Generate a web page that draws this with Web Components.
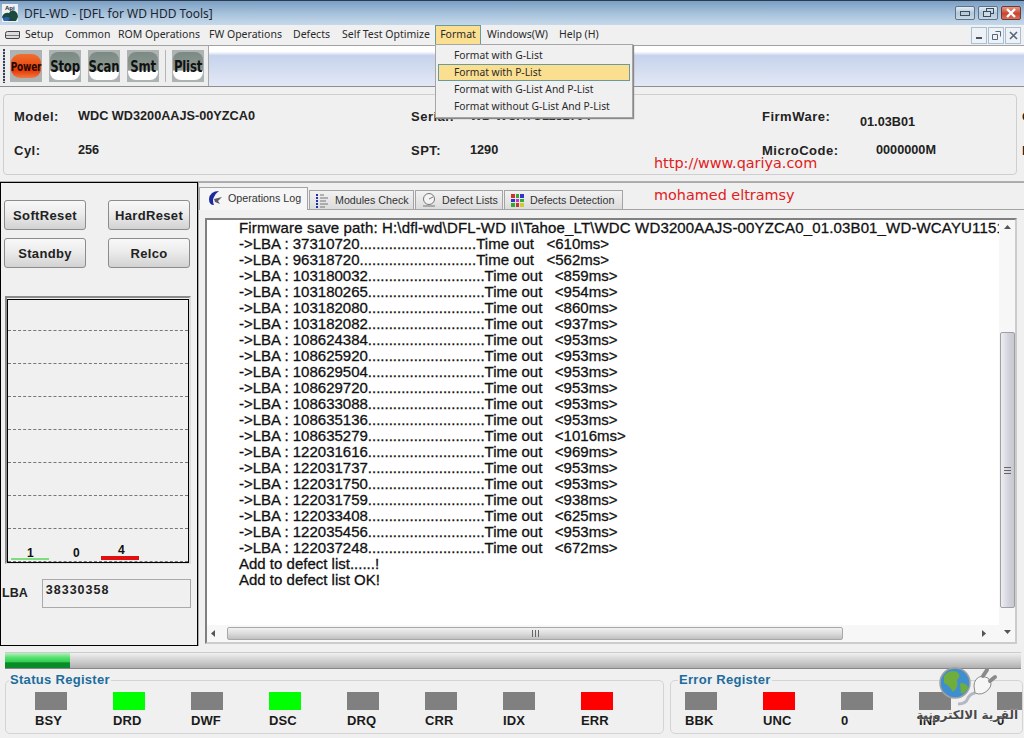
<!DOCTYPE html>
<html>
<head>
<meta charset="utf-8">
<title>DFL-WD</title>
<style>
  html, body { margin: 0; height: 738px; overflow: hidden; background: #f0f0f0; }
  body { display: flex; flex-direction: column; position: relative; font-family: "Liberation Sans", Arial, sans-serif; color: #222; }
</style>
</head>
<body>
<title-bar>DFL-WD - [DFL for WD HDD Tools]</title-bar>
<menu-bar></menu-bar>
<tool-bar></tool-bar>
<drive-info></drive-info>
<main-area>
  <control-panel slot="left"></control-panel>
  <log-panel slot="right"></log-panel>
</main-area>
<progress-strip></progress-strip>
<register-row>
  <register-group heading="Status Register" style="width:659px" pad="29" legend="3">
    <reg-lamp>BSY</reg-lamp><reg-lamp color="#00ff00">DRD</reg-lamp><reg-lamp>DWF</reg-lamp><reg-lamp color="#00ff00">DSC</reg-lamp>
    <reg-lamp>DRQ</reg-lamp><reg-lamp>CRR</reg-lamp><reg-lamp>IDX</reg-lamp><reg-lamp color="#ff0000">ERR</reg-lamp>
  </register-group>
  <register-group heading="Error Register" style="flex:1" pad="14" legend="7">
    <reg-lamp>BBK</reg-lamp><reg-lamp color="#ff0000">UNC</reg-lamp><reg-lamp>0</reg-lamp><reg-lamp>INF</reg-lamp><reg-lamp>0</reg-lamp>
  </register-group>
</register-row>
<red-note style="left:654px;top:155px">http://www.qariya.com</red-note>
<red-note style="left:654px;top:187px">mohamed eltramsy</red-note>
<site-mark></site-mark>

<script>
class TitleBar extends HTMLElement {
  constructor () {
    super()
    this.attachShadow({ mode: 'open' }).innerHTML = /*html*/`
      <style>
        :host { display: flex; align-items: center; height: 25px; box-sizing: border-box; border-top: 1px solid #2c3a4e;
          background: linear-gradient(#7b9fc4, #a8c3dc 55%, #c6d9ea); font: 12px "Noto Sans", sans-serif; color: #1c2430; padding: 0 3px 0 2px; }
        svg.logo { flex: none; margin-right: 6px; }
        .text { flex: 1; }
        .btns { display: flex; gap: 3px; padding-bottom: 1px; }
        .btn { width: 20px; height: 14px; box-sizing: border-box; border: 1px solid #5e7286; border-radius: 2px; display: flex; align-items: center; justify-content: center;
          background: linear-gradient(#e4edf5, #b4c8da 50%, #c8d8e6); }
        .close { background: linear-gradient(#e79a88, #c9442c 55%, #d8705c); border-color: #6e3a32; }
      </style>
      <svg class="logo" width="16" height="18" viewBox="0 0 16 18">
        <rect width="16" height="18" fill="#eef2f6"/>
        <text x="3" y="6" font-size="6" font-weight="700" font-family="Liberation Sans" fill="#223">Api</text>
        <path d="M0 13 Q2 8 7 9 Q9 5 13 7 Q16 9 16 13 L14 17 L2 17 Z" fill="#1d4a3e"/>
        <path d="M1 14 Q5 12 8 14 L6 17 L2 17 Z" fill="#2a62b8"/>
      </svg>
      <span class="text"><slot></slot></span>
      <div class="btns">
        <div class="btn"><svg width="12" height="8"><rect x="1.5" y="2.5" width="9" height="4" fill="none" stroke="#3c4c5c"/></svg></div>
        <div class="btn"><svg width="12" height="10"><rect x="4.5" y=".5" width="7" height="5" fill="none" stroke="#3c4c5c"/><rect x="1.5" y="3.5" width="7" height="5" fill="#cddbe7" stroke="#3c4c5c"/></svg></div>
        <div class="btn close"><svg width="12" height="10"><path d="M2 1 L10 9 M10 1 L2 9" stroke="#fff" stroke-width="2.4"/></svg></div>
      </div>`
  }
}
customElements.define('title-bar', TitleBar)

class MenuBar extends HTMLElement {
  constructor () {
    super()
    this.shadow = this.attachShadow({ mode: 'open' })
    this.data = [
      ['Setup', 40], ['Common', 53], ['ROM Operations', 91], ['FW Operations', 84],
      ['Defects', 49], ['Self Test Optimize', 93], ['Format', 46], ['Windows(W)', 72], ['Help (H)', 50]
    ]
  }

  connectedCallback () {
    this.shadow.innerHTML = /*html*/`
      <style>
        :host { display: flex; align-items: stretch; height: 21px; box-sizing: border-box; background: #f0f0f0; border-bottom: 1px solid #a2a2a2;
          font: 10.5px "Noto Sans", sans-serif; color: #2a2a2a; padding-left: 5px; position: relative; z-index: 5; }
        svg.drive { align-self: center; margin-right: 4px; flex: none; }
        .items { display: flex; flex: 1; }
        .item { box-sizing: border-box; white-space: nowrap; display: flex; align-items: center; border: 1px solid transparent; border-width: 1px 1px 1px 0; height: 20px; padding-bottom: 3px; }
        .active { background: #fbdf90; border: 1px solid #6b9a9a; justify-content: center; position: relative; }
        .after { padding-left: 6px; }
        .mdi { display: flex; gap: 1px; padding: 2px 3px 0 0; }
        .mdi div { width: 16px; height: 17px; box-sizing: border-box; border: 1px solid #a8c0d4; background: #eef2f6; display: flex; align-items: center; justify-content: center; }
        .drop { position: absolute; left: -1px; top: 18px; width: 198px; height: 74px; box-sizing: border-box; background: #f0f0f0;
          border: 1px solid #a6a6a6; box-shadow: 1px 1px 1px #888; padding: 2px 2px; display: flex; flex-direction: column; font-size: 10.3px; }
        .drop div { height: 17px; flex: none; box-sizing: border-box; line-height: 15px; padding-left: 15px; border: 1px solid transparent; white-space: nowrap; }
        .drop .hot { background: #fbdf90; border-color: #6b9a9a; }
      </style>
      <svg class="drive" width="16" height="10" viewBox="0 0 16 10">
        <path d="M2.5 1.5 H14.5 V7 Q14.5 8.5 13 8.5 H2 Q.5 8.5 .5 7 V3.5 Q.5 1.5 2.5 1.5Z" fill="#dcdcdc" stroke="#444"/>
        <path d="M1 5.5 H14" stroke="#777"/>
      </svg>
      <div class="items"></div>
      <div class="mdi">
        <div><svg width="9" height="9"><path d="M1 7 H7" stroke="#456" stroke-width="2"/></svg></div>
        <div><svg width="9" height="9"><path d="M3.5 .5 H8.5 V5.5 M.5 3.5 H5.5 V8.5 H.5Z" fill="none" stroke="#567"/></svg></div>
        <div><svg width="9" height="9"><path d="M1 1 L8 8 M8 1 L1 8" stroke="#567" stroke-width="1.6"/></svg></div>
      </div>`

    const items = this.shadow.querySelector('.items')
    let past = false

    this.data.forEach(entry => {
      const item = document.createElement('div')
      item.classList.add('item')
      item.style.width = entry[1] + 'px'
      if (past) item.classList.add('after')
      const label = document.createElement('span')
      label.textContent = entry[0]
      item.appendChild(label)
      items.appendChild(item)

      if (entry[0] === 'Format') {
        past = true
        item.classList.add('active')
        const drop = document.createElement('div')
        drop.classList.add('drop')
        const rows = ['Format with G-List', 'Format with P-List', 'Format with G-List And P-List', 'Format without G-List And P-List']
        rows.forEach((text, i) => {
          const row = document.createElement('div')
          row.textContent = text
          if (i === 1) row.classList.add('hot')
          drop.appendChild(row)
        })
        item.appendChild(drop)
      }
    })
  }
}
customElements.define('menu-bar', MenuBar)

class ToolBar extends HTMLElement {
  constructor () {
    super()
    this.shadow = this.attachShadow({ mode: 'open' })
  }

  connectedCallback () {
    const btn = (text, hot) => `<div class="tool"><div class="face ${hot ? 'hot' : ''}"><span>${text}</span></div></div>`
    this.shadow.innerHTML = /*html*/`
      <style>
        :host { display: flex; height: 41px; box-sizing: border-box; border-bottom: 1px solid #8e8e8e;
          background: linear-gradient(#fff, #fff 14%, #c6d3ec 24%, #e3e8f5); }
        .left { width: 209px; box-sizing: border-box; background: #eeeeee; border-right: 1px solid #a8a8a8; display: flex; align-items: center; gap: 7px; padding: 0 0 0 3px; }
        .grip { width: 2px; height: 34px; background: repeating-linear-gradient(#33405a 0 2px, #c4c8d0 2px 3px); margin-right: -2px; }
        .tool { width: 32px; height: 32px; background: #adb2b2; display: flex; align-items: center; justify-content: center; }
        .face { width: 30px; height: 28px; border-radius: 8px; background: linear-gradient(#7c8a84, #8f9b95 65%, #fff 68%);
          display: flex; align-items: center; justify-content: center; font: 700 13px "DejaVu Sans Condensed", "DejaVu Sans", sans-serif; color: #111; letter-spacing: -.2px; }
        .face span { display: inline-block; transform: scaleY(1.25); }
        .hot { background: linear-gradient(#f07030, #e83c08 70%, #f07a40); font-size: 10px; color: #2a0a00; border-radius: 9px; height: 24px; }
        .sep { width: 1px; height: 32px; background: #b4b4b4; margin: 0 -1px; }
      </style>
      <div class="left">
        <div class="grip"></div>
        ${btn('Power', true)}${btn('Stop')}${btn('Scan')}${btn('Smt')}
        <div class="sep"></div>
        ${btn('Plist')}
      </div>`
  }
}
customElements.define('tool-bar', ToolBar)

class DriveInfo extends HTMLElement {
  constructor () {
    super()
    this.attachShadow({ mode: 'open' }).innerHTML = /*html*/`
      <style>
        :host { display: block; height: 95px; box-sizing: border-box; background: #f0f0f0; border-bottom: 1px solid #b0b0b0; padding: 7px 7px 6px 3px; overflow: hidden; }
        .box { height: 81px; box-sizing: border-box; border: 1px solid #cfcfcf; border-radius: 4px; padding: 14px 0 0 10px;
          display: grid; grid-template-columns: 64px 333px 59px 292px 98px 162px 20px; grid-template-rows: 34px 20px; align-items: start;
          font: 700 13px "Liberation Sans", sans-serif; color: #222; white-space: nowrap; letter-spacing: .5px; }
        .val { font-size: 12.7px; letter-spacing: 0; }
        .fw { padding-top: 6px; }
        .mc { padding-left: 16px; }
      </style>
      <div class="box">
        <span>Model:</span><span class="val">WDC WD3200AAJS-00YZCA0</span>
        <span>Serial:</span><span class="val">WD-WCAYU1151794</span>
        <span>FirmWare:</span><span class="val fw">01.03B01</span><span>Cache:</span>
        <span>Cyl:</span><span class="val">256</span>
        <span>SPT:</span><span class="val">1290</span>
        <span>MicroCode:</span><span class="val mc">0000000M</span><span>LBA:</span>
      </div>`
  }
}
customElements.define('drive-info', DriveInfo)

class MainArea extends HTMLElement {
  constructor () {
    super()
    this.attachShadow({ mode: 'open' }).innerHTML = /*html*/`
      <style>
        :host { display: grid; grid-template-columns: 198px 1fr; height: 464px; }
      </style>
      <slot name="left"></slot><slot name="right"></slot>`
  }
}
customElements.define('main-area', MainArea)

class ControlPanel extends HTMLElement {
  constructor () {
    super()
    this.attachShadow({ mode: 'open' }).innerHTML = /*html*/`
      <style>
        :host { display: block; box-sizing: border-box; height: 464px; border: 1px solid #000; background: #f0f0f0; padding: 17px 6px 0 3px; }
        .btns { display: grid; grid-template-columns: 82px 82px; column-gap: 22px; row-gap: 8px; }
        .b { height: 30px; box-sizing: border-box; border: 1px solid #8c8c8c; border-radius: 3px; background: linear-gradient(#f8f8f8, #ececec 45%, #d2d2d2);
          display: flex; align-items: center; justify-content: center; font: 700 13px "Liberation Sans", sans-serif; letter-spacing: .35px; color: #222; }
        .chart { margin: 28px 0 0 1px; height: 268px; box-sizing: border-box; border: 2px solid #8a8a8a; border-right-color: #ddd; border-bottom-color: #ddd; padding: 1px 0 0 0; }
        .plot { height: 264px; box-sizing: border-box; border: 1px solid #000; position: relative; display: flex; flex-direction: column; overflow: hidden; }
        .row { height: 33px; flex: none; box-sizing: border-box; border-bottom: 1px dashed #777; }
        .row:first-child { height: 31px; }
        .n { position: absolute; top: 246px; font: 700 12px "Liberation Sans", sans-serif; color: #111; }
        .bar { position: absolute; width: 38px; }
        .lba { display: flex; align-items: flex-start; margin: 15px 0 0 -2px; font: 700 12.5px "Liberation Sans", sans-serif; }
        .lba label { width: 40px; padding-top: 7px; }
        .field { width: 150px; height: 29px; box-sizing: border-box; border: 1px solid #aaa; padding: 3px 0 0 3px; letter-spacing: 1px; }
      </style>
      <div class="btns">
        <div class="b">SoftReset</div><div class="b">HardReset</div>
        <div class="b">Standby</div><div class="b">Relco</div>
      </div>
      <div class="chart">
        <div class="plot">
          <div class="row"></div><div class="row"></div><div class="row"></div><div class="row"></div>
          <div class="row"></div><div class="row"></div><div class="row"></div><div class="row"></div>
          <span class="n" style="left:19px">1</span>
          <span class="n" style="left:65px;top:246px">0</span>
          <span class="n" style="left:110px;top:243px">4</span>
          <div class="bar" style="left:3px;top:258px;height:2px;background:#7ddc7d"></div>
          <div class="bar" style="left:93px;top:256px;height:4px;background:#e01010"></div>
        </div>
      </div>
      <div class="lba"><label>LBA</label><div class="field">38330358</div></div>`
  }
}
customElements.define('control-panel', ControlPanel)

class LogPanel extends HTMLElement {
  constructor () {
    super()
    this.shadow = this.attachShadow({ mode: 'open' })
    this.data = [
      ['37310720', 610], ['96318720', 562], ['103180032', 859], ['103180265', 954], ['103182080', 860],
      ['103182082', 937], ['108624384', 953], ['108625920', 953], ['108629504', 953], ['108629720', 953],
      ['108633088', 953], ['108635136', 953], ['108635279', 1016], ['122031616', 969], ['122031737', 953],
      ['122031750', 953], ['122031759', 938], ['122033408', 625], ['122035456', 953], ['122037248', 672]
    ]
  }

  connectedCallback () {
    this.shadow.innerHTML = /*html*/`
      <style>
        :host { display: flex; flex-direction: column; height: 464px; box-sizing: border-box; background: #f0f0f0; border-top: 1px solid #aaa; border-left: 1px solid #aaa; padding-top: 3px; }
        .tabs { display: flex; height: 23px; align-items: flex-end; font: 10.7px "Liberation Sans", sans-serif; color: #333; gap: 1px; }
        .tab { height: 19px; box-sizing: border-box; border: 1px solid #a4a4a4; border-bottom: 0; background: linear-gradient(#f2f2f2, #dcdcdc); display: flex; align-items: center; white-space: nowrap; gap: 5px; padding-left: 5px; }
        .tab.on { height: 23px; background: #f6f6f6; gap: 5px; padding: 0 0 2px 6px; position: relative; top: 1px; }
        .page { flex: 1; border-top: 1px solid #a4a4a4; padding: 8px 7px 2px 6px; display: flex; min-height: 0; }
        .frame { flex: 1; min-width: 0; display: grid; grid-template-columns: 1fr 16px; grid-template-rows: 1fr 17px; border: 2px solid #808080; border-right-color: #ccc; border-bottom-color: #ccc; background: #fff; }
        .text { overflow: hidden; white-space: pre; padding: 0 0 0 32px; font: 15px/16px "Liberation Sans", sans-serif; color: #111; -webkit-text-stroke: .3px #111; }
        .text div:first-child { letter-spacing: .15px; }
        .v { background: #f7f7f7; display: flex; flex-direction: column; align-items: center; grid-row: 1 / 3; grid-column: 2; }
        .thumb-v { width: 15px; height: 276px; margin-top: 97px; box-sizing: border-box; border: 1px solid #a0a0a0; border-radius: 2px; background: linear-gradient(90deg, #eeeef2, #d2d2dc 60%, #c8c8d0); display: flex; align-items: center; justify-content: center; flex: none; }
        .h { background: #f7f7f7; display: flex; align-items: center; min-width: 0; }
        .thumb-h { width: 616px; height: 13px; margin-left: 11px; box-sizing: border-box; border: 1px solid #a8a8a8; border-radius: 2px; background: linear-gradient(#f2f2f2, #dcdcdc 50%, #c0c0c0); display: flex; align-items: center; justify-content: center; flex: none; }
        .arrow { flex: none; }
      </style>
      <div class="tabs">
        <div class="tab on" style="width:109px">
          <svg width="17" height="17" viewBox="0 0 17 17"><path d="M13 1 Q4 1 3 9 Q3 15 8 15 Q6 10 8 7 Q10 3 13 1Z" fill="#1c2aa0"/><path d="M8 9 L16 7 L12 11 L14 14 L9 12Z" fill="#5a5a6a"/></svg>
          Operations Log</div>
        <div class="tab" style="width:105px">
          <svg width="15" height="15" viewBox="0 0 15 15"><path d="M1 1h2v2H1zM1 4h2v2H1zM1 7h2v2H1zM1 10h2v2H1zM1 13h2v2H1z" fill="#2233aa"/><path d="M5 2h4M5 5h8M5 8h6M5 11h8M5 14h5" stroke="#777"/></svg>
          Modules Check</div>
        <div class="tab" style="width:88px">
          <svg width="16" height="16" viewBox="0 0 16 16"><circle cx="8" cy="7" r="5.5" fill="#f4f4f4" stroke="#777"/><path d="M8 7 L12 5 M2 14 H14" stroke="#777"/></svg>
          Defect Lists</div>
        <div class="tab" style="width:119px">
          <svg width="15" height="15" viewBox="0 0 15 15"><path d="M1 1h4v4H1z" fill="#c33"/><path d="M6 1h3v4H6z" fill="#3a3"/><path d="M10 1h4v4h-4z" fill="#33c"/><path d="M1 6h4v3H1z" fill="#33c"/><path d="M6 6h3v3H6z" fill="#c3c"/><path d="M10 6h4v3h-4z" fill="#3a3"/><path d="M1 10h4v4H1z" fill="#3a3"/><path d="M6 10h3v4H6z" fill="#c33"/><path d="M10 10h4v4h-4z" fill="#cc3"/></svg>
          Defects Detection</div>
      </div>
      <div class="page">
        <div class="frame">
          <div class="text"></div>
          <div class="v">
            <svg class="arrow" width="15" height="15"><path d="M4 9 L7.5 5 L11 9Z" fill="#555"/></svg>
            <div class="thumb-v"><svg width="9" height="9"><path d="M1 1.5H8M1 4.5H8M1 7.5H8" stroke="#666"/></svg></div>
            <div style="flex:1"></div>
            <svg class="arrow" width="15" height="18"><path d="M4 6 L7.5 10 L11 6Z" fill="#555"/></svg>
          </div>
          <div class="h">
            <svg class="arrow" width="9" height="13"><path d="M8 3 L4 6.5 L8 10Z" fill="#555"/></svg>
            <div class="thumb-h"><svg width="9" height="9"><path d="M1.5 1V8M4.5 1V8M7.5 1V8" stroke="#666"/></svg></div>
            <div style="flex:1"></div>
            <svg class="arrow" width="20" height="13"><path d="M3 3 L7 6.5 L3 10Z" fill="#555"/></svg>
          </div>
        </div>
      </div>`

    const text = this.shadow.querySelector('.text')
    const lines = ['Firmware save path: H:\\dfl-wd\\DFL-WD II\\Tahoe_LT\\WDC WD3200AAJS-00YZCA0_01.03B01_WD-WCAYU1151794']

    this.data.forEach(row => {
      lines.push('->LBA : ' + row[0] + '.'.repeat(28) + 'Time out   <' + row[1] + 'ms>')
    })

    lines.push('Add to defect list......!', 'Add to defect list OK!')

    lines.forEach(line => {
      const lineBox = document.createElement('div')
      lineBox.textContent = line
      text.appendChild(lineBox)
    })
  }
}
customElements.define('log-panel', LogPanel)

class ProgressStrip extends HTMLElement {
  constructor () {
    super()
    this.attachShadow({ mode: 'open' }).innerHTML = /*html*/`
      <style>
        :host { display: block; height: 24px; box-sizing: border-box; padding: 6px 3px 1px 5px; background: #f0f0f0; }
        .track { height: 17px; border-bottom: 1px solid #888; border-top: 1px solid #ccc; box-sizing: border-box; background: linear-gradient(#f0f0f0, #dcdcdc 30%, #c8c8c8 65%, #b0b0b0); }
        .fill { width: 65px; height: 100%; background: linear-gradient(#b8f0c0, #58e070 30%, #30d050 60%, #0a8a28 65%, #0a8a28); }
      </style>
      <div class="track"><div class="fill"></div></div>`
  }
}
customElements.define('progress-strip', ProgressStrip)

class RegisterRow extends HTMLElement {
  constructor () {
    super()
    this.attachShadow({ mode: 'open' }).innerHTML = /*html*/`
      <style>
        :host { display: flex; gap: 6px; padding: 10px 1px 0 5px; height: 67px; box-sizing: border-box; background: #f0f0f0; }
      </style>
      <slot></slot>`
  }
}
customElements.define('register-row', RegisterRow)

class RegisterGroup extends HTMLElement {
  constructor () {
    super()
    this.attachShadow({ mode: 'open' })
  }

  connectedCallback () {
    this.shadowRoot.innerHTML = /*html*/`
      <style>
        :host { display: block; box-sizing: border-box; min-width: 0; height: 54px; border: 1px solid #d4d4d4; border-radius: 5px; position: relative; }
        .legend { position: absolute; left: ${this.getAttribute('legend')}px; top: -9px; background: #f0f0f0; padding: 0 1px; font: 700 13px "Liberation Sans", sans-serif; color: #1c6c9c; white-space: nowrap; letter-spacing: .3px; }
        .lamps { display: flex; padding: 11px 0 0 ${this.getAttribute('pad')}px; box-sizing: border-box; overflow: hidden; height: 50px; }
      </style>
      <div class="legend">${this.getAttribute('heading')}</div>
      <div class="lamps"><slot></slot></div>`
  }
}
customElements.define('register-group', RegisterGroup)

class RegLamp extends HTMLElement {
  constructor () {
    super()
    this.attachShadow({ mode: 'open' })
  }

  connectedCallback () {
    const color = this.getAttribute('color') || '#808080'
    this.shadowRoot.innerHTML = /*html*/`
      <style>
        :host { display: block; flex: none; width: 78px; font: 700 13px "Liberation Sans", sans-serif; color: #1a1a1a; letter-spacing: .1px; }
        .lamp { width: 32px; height: 18px; background: ${color}; margin-bottom: 3px; }
        .label { width: 32px; overflow: hidden; white-space: nowrap; }
      </style>
      <div class="lamp"></div>
      <div class="label"><slot></slot></div>`
  }
}
customElements.define('reg-lamp', RegLamp)

class RedNote extends HTMLElement {
  constructor () {
    super()
    this.attachShadow({ mode: 'open' }).innerHTML = /*html*/`
      <style>
        :host { display: block; position: absolute; font: 14.4px "DejaVu Sans", sans-serif; color: #e02020; white-space: nowrap; z-index: 3; }
      </style>
      <slot></slot>`
  }
}
customElements.define('red-note', RedNote)

class SiteMark extends HTMLElement {
  constructor () {
    super()
    this.attachShadow({ mode: 'open' }).innerHTML = /*html*/`
      <style>
        :host { display: block; position: absolute; left: 912px; top: 666px; width: 112px; height: 66px; z-index: 4; }
        svg { display: block; margin-left: 26px; }
        .ar { font: 700 12px "DejaVu Sans", sans-serif; color: #4a4a4a; direction: rtl; text-align: right; padding-right: 6px; margin-top: 2px; white-space: nowrap; text-shadow: 0 0 2px #fff; }
      </style>
      <svg width="62" height="40" viewBox="0 0 62 40">
        <circle cx="17" cy="17" r="15" fill="#3f8fd0" stroke="#a0a0a0" stroke-width="1.5"/>
        <path d="M6 10 Q12 3 19 6 Q24 9 19 14 Q21 21 15 26 Q11 19 6 17Z" fill="#6fae3c"/>
        <path d="M22 17 Q29 17 30 22 Q26 29 23 27Z" fill="#6fae3c"/>
        <path d="M20 38 Q28 38 30 32 Q32 28 37 27" fill="none" stroke="#b4b8c4" stroke-width="3"/>
        <path d="M37 27 L36 20 Q36 12 44 10 L50 12 Q56 18 50 24 Q44 30 37 27Z" fill="#f6f6f6" stroke="#8a8a8a"/>
        <path d="M45 10 L49 4 M52 15 L57 11" stroke="#8a8a8a" stroke-width="4" stroke-linecap="round"/>
      </svg>
      <div class="ar">القرية الالكترونية</div>`
  }
}
customElements.define('site-mark', SiteMark)
</script>
</body>
</html>
